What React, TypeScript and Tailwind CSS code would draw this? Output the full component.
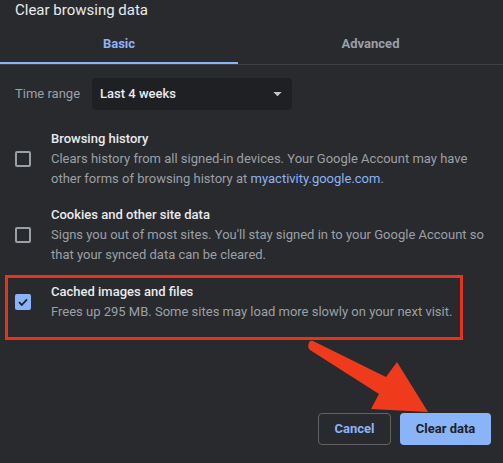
import React from 'react';

interface Item {
  title: string;
  desc: React.ReactNode;
  checked: boolean;
}

const items: Item[] = [
  {
    title: 'Browsing history',
    desc: (
      <>
        Clears history from all signed-in devices. Your Google Account may have other forms of browsing history at{' '}
        <span className="text-[#8ab4f8]">myactivity.google.com</span>.
      </>
    ),
    checked: false,
  },
  {
    title: 'Cookies and other site data',
    desc: "Signs you out of most sites. You'll stay signed in to your Google Account so that your synced data can be cleared.",
    checked: false,
  },
];

function Checkbox({ checked }: { checked: boolean }) {
  if (checked) {
    return (
      <div className="w-4 h-4 shrink-0 rounded-[2px] bg-[#8ab4f8] flex items-center justify-center">
        <svg width="12" height="12" viewBox="0 0 12 12">
          <path d="M2 6.2 L4.8 9 L10 3.4" fill="none" stroke="#202124" strokeWidth="1.8" />
        </svg>
      </div>
    );
  }
  return <div className="w-4 h-4 shrink-0 rounded-[2px] border-2 border-[#9aa0a6]" />;
}

function Row({ item }: { item: Item }) {
  return (
    <div className="flex items-center">
      <div className="w-9 shrink-0">
        <Checkbox checked={item.checked} />
      </div>
      <div className="text-[13px] leading-5">
        <div className="text-[#e8eaed] font-medium">{item.title}</div>
        <div className="text-[#9aa0a6]">{item.desc}</div>
      </div>
    </div>
  );
}

export default function App() {
  return (
    <div className="relative w-[503px] h-[463px] overflow-hidden bg-[#292a2d] font-['Roboto',sans-serif]">
      <div className="pl-[15px] h-[22px] pt-[1px] text-[15px] leading-[18px] text-[#e8eaed]">Clear browsing data</div>

      <div className="flex h-[43px] border-b border-[#3c4043]">
        <div className="w-[238px] flex flex-col">
          <div className="flex-1 flex items-center justify-center pt-[4px] text-[13px] font-bold text-[#8ab4f8]">
            Basic
          </div>
          <div className="h-[2px] bg-[#8ab4f8]" />
        </div>
        <div className="flex-1 flex items-center justify-center pt-[4px] pb-[2px] text-[13px] font-bold text-[#9aa0a6]">
          Advanced
        </div>
      </div>

      <div className="flex items-center mt-[13px] pl-[15px]">
        <div className="w-[77px] text-[13px] text-[#9aa0a6]">Time range</div>
        <div className="w-[200px] h-[32px] rounded-[4px] bg-[#1f2023] flex items-center justify-between pl-[8px] pr-[10px]">
          <span className="text-[13px] text-[#e8eaed] font-medium">Last 4 weeks</span>
          <svg width="9" height="5" viewBox="0 0 10 6">
            <path d="M0 0 L10 0 L5 5 Z" fill="#c4c7c5" />
          </svg>
        </div>
      </div>

      <div className="flex flex-col gap-4 mt-[19px] pl-[15px] pr-[18px]">
        {items.map((it) => (
          <Row key={it.title} item={it} />
        ))}
      </div>

      <div className="mt-[10px] ml-[5px] w-[458px] h-[65px] border-[3px] border-[#e8331a] flex items-start pt-[4px] pl-[7px]">
        <Row
          item={{
            title: 'Cached images and files',
            desc: 'Frees up 295 MB. Some sites may load more slowly on your next visit.',
            checked: true,
          }}
        />
      </div>

      <div className="flex justify-end gap-[9px] mt-[73px] pr-[12px]">
        <button className="w-[73px] h-[32px] rounded-[4px] border border-[#5f6368] text-[13px] font-bold text-[#8ab4f8]">
          Cancel
        </button>
        <button className="w-[91px] h-[32px] rounded-[4px] bg-[#8ab4f8] text-[13px] font-bold text-[#202124]">
          Clear data
        </button>
      </div>

      <svg className="absolute left-0 top-0 pointer-events-none" width="503" height="463" viewBox="0 0 503 463">
        <path
          d="M309 343 Q309 340 313 341 L386 377 L397 362 L428 412 L371 409 L379 394 L310 350 Q307 347 309 343 Z"
          fill="#f03a1c"
        />
      </svg>
    </div>
  );
}
